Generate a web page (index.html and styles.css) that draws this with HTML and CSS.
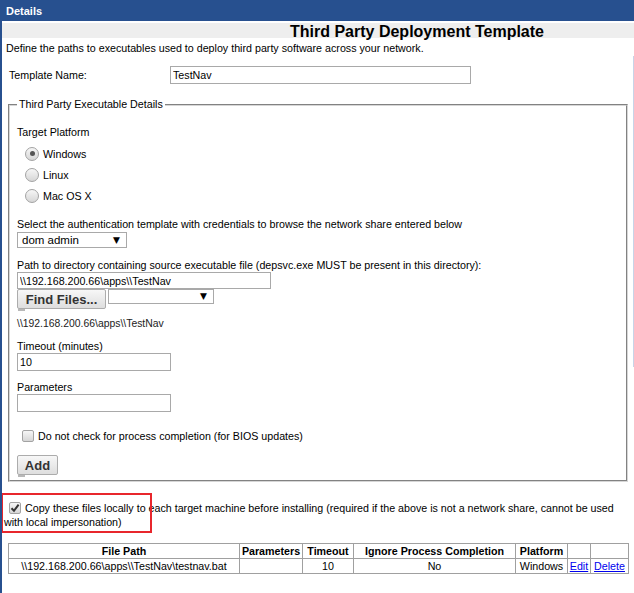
FILE: index.html
```html
<!DOCTYPE html>
<html lang="en">
<head>
    <meta charset="UTF-8">
    <title>Third Party Deployment Template</title>
    <link rel="stylesheet" href="styles.css">
</head>
<body>

<div class="panel">
    <div class="panel-header">Details</div>
    <div class="scroll-edge"></div>

    <h1 class="page-title">Third Party Deployment Template</h1>
    <div class="intro">Define the paths to executables used to deploy third party software across your network.</div>

    <div class="name-row">
        <span class="name-label">Template Name:</span>
        <input type="text" class="text-input name-input" value="TestNav">
    </div>

    <fieldset class="exec-details">
        <legend>Third Party Executable Details</legend>

        <div class="field-label platform-label">Target Platform</div>
        <label class="radio-row"><span class="radio checked"></span>Windows</label>
        <label class="radio-row"><span class="radio"></span>Linux</label>
        <label class="radio-row"><span class="radio"></span>Mac OS X</label>

        <div class="field-label auth-label">Select the authentication template with credentials to browse the network share entered below</div>
        <div class="select auth-select"><span>dom admin</span><span class="arrow">&#9660;</span></div>

        <div class="field-label path-label">Path to directory containing source executable file (depsvc.exe MUST be present in this directory):</div>
        <input type="text" class="text-input path-input" value="\\192.168.200.66\apps\\TestNav">
        <div class="find-row">
            <button class="button find-button">Find Files...</button>
            <div class="select file-select"><span></span><span class="arrow">&#9660;</span></div>
        </div>
        <div class="path-note">\\192.168.200.66\apps\\TestNav</div>

        <div class="field-label timeout-label">Timeout (minutes)</div>
        <input type="text" class="text-input short-input" value="10">

        <div class="field-label params-label">Parameters</div>
        <input type="text" class="text-input short-input" value="">

        <label class="check-row"><span class="checkbox"></span>Do not check for process completion (for BIOS updates)</label>

        <button class="button add-button">Add</button>
    </fieldset>

    <div class="copy-wrap">
        <p class="copy-text"><span class="checkbox checked"><svg width="10" height="10" viewBox="0 0 10 10"><path d="M1.5 5.2 L4 7.8 L8.6 1.6" fill="none" stroke="#333" stroke-width="2"/></svg></span>Copy these files locally to each target machine before installing (required if the above is not a network share, cannot be used with local impersonation)</p>
        <div class="highlight"></div>
    </div>

    <table class="file-table">
        <colgroup>
            <col class="col-path">
            <col class="col-params">
            <col class="col-timeout">
            <col class="col-ignore">
            <col class="col-platform">
            <col class="col-edit">
            <col class="col-delete">
        </colgroup>
        <tr>
            <th>File Path</th>
            <th>Parameters</th>
            <th>Timeout</th>
            <th>Ignore Process Completion</th>
            <th>Platform</th>
            <th></th>
            <th></th>
        </tr>
        <tr>
            <td>\\192.168.200.66\apps\\TestNav\testnav.bat</td>
            <td></td>
            <td>10</td>
            <td>No</td>
            <td>Windows</td>
            <td><a href="#">Edit</a></td>
            <td><a href="#">Delete</a></td>
        </tr>
    </table>
</div>

</body>
</html>
```

FILE: styles.css
```css
body {
    margin: 0;
    font-family: "Liberation Sans", Arial, sans-serif;
    font-size: 10.7px;
    color: #000;
    background-color: #fff;
}
.panel {
    position: relative;
    border-left: 2px solid #27508f;
    height: 593px;
    box-sizing: border-box;
    overflow: hidden;
}
.panel-header {
    background-color: #27508f;
    color: #fff;
    font-weight: bold;
    font-size: 11px;
    height: 21px;
    line-height: 22px;
    padding-left: 4px;
}
.scroll-edge {
    position: absolute;
    right: 0;
    top: 56px;
    width: 1px;
    height: 311px;
    background-color: #c8d4e8;
}
.page-title {
    margin: 2px 0 0;
    height: 15px;
    line-height: 17px;
    background-color: #eee;
    font-size: 16px;
    text-align: center;
    padding-left: 198px;
}
.intro {
    margin: 4px 0 0 4px;
    line-height: 13px;
}
.name-row {
    display: flex;
    align-items: center;
    margin-top: 11px;
    padding-left: 7px;
}
.name-label {
    width: 161px;
}
.text-input {
    display: block;
    box-sizing: border-box;
    height: 18px;
    margin: 0;
    padding: 0 2px;
    border: 1px solid #a9a9a9;
    font-family: inherit;
    font-size: 10.7px;
    color: #000;
}
.name-input {
    width: 301px;
}
.path-input {
    width: 254px;
    height: 17px;
}
.short-input {
    width: 154px;
}

/* fieldset */
.exec-details {
    margin: 14px 6px 0 6px;
    padding: 0 7px 5px;
    border: 2px groove #d6d6d6;
    min-width: 0;
}
.exec-details legend {
    padding: 0 2px;
    line-height: 13px;
}
.field-label {
    line-height: 13px;
}
.platform-label {
    margin-top: 15px;
}
.auth-label {
    margin-top: 16px;
}
.path-label {
    margin-top: 11px;
}
.timeout-label {
    margin-top: 10px;
}
.params-label {
    margin-top: 10px;
}
.radio-row {
    display: flex;
    align-items: center;
    gap: 4px;
    height: 13px;
    margin-top: 8px;
    padding-left: 8px;
}
.radio {
    width: 12px;
    height: 12px;
    border: 1px solid #a3a3a3;
    border-radius: 50%;
    background: linear-gradient(#f6f6f6, #d6d6d6);
    position: relative;
}
.radio.checked::after {
    content: "";
    position: absolute;
    left: 3.5px;
    top: 3.5px;
    width: 5px;
    height: 5px;
    border-radius: 50%;
    background-color: #555;
}
.check-row {
    display: flex;
    align-items: center;
    gap: 4px;
    height: 13px;
    margin-top: 17px;
    padding-left: 5px;
}
.checkbox {
    display: inline-block;
    box-sizing: border-box;
    width: 12px;
    height: 12px;
    border: 1px solid #a3a3a3;
    border-radius: 2px;
    background: linear-gradient(#f6f6f6, #d6d6d6);
    vertical-align: -2px;
}
.checkbox svg {
    display: block;
}

/* selects and buttons */
.select {
    display: flex;
    justify-content: space-between;
    align-items: center;
    box-sizing: border-box;
    border: 1px solid #a9a9a9;
    background-color: #fff;
    line-height: 13px;
}
.select .arrow {
    font-family: "DejaVu Sans", sans-serif;
    font-size: 9px;
}
.auth-select {
    width: 110px;
    height: 16px;
    margin-top: 1px;
    padding: 0 6px 0 4px;
    font-size: 11.5px;
}
.file-select {
    width: 106px;
    height: 15px;
    padding: 0 6px 0 4px;
}
.find-row {
    display: flex;
    align-items: flex-start;
    gap: 2px;
}
.button {
    position: relative;
    box-sizing: border-box;
    border: 1px solid #acacac;
    border-radius: 2px;
    background: linear-gradient(#f7f7f7, #dedede);
    font-family: inherit;
    font-size: 13px;
    font-weight: bold;
    color: #333;
    padding: 0;
    margin: 0;
}
.button::after {
    content: "";
    position: absolute;
    left: 0;
    bottom: -3px;
    width: 7px;
    height: 2px;
    background-color: #b8b8b8;
}
.find-button {
    width: 89px;
    height: 20px;
}
.path-note {
    margin-top: 8px;
    line-height: 13px;
    font-size: 10.4px;
    color: #222;
}
.add-button {
    display: block;
    width: 41px;
    height: 20px;
    margin-top: 13px;
}

/* copy option */
.copy-wrap {
    position: relative;
    margin-top: 19px;
}
.copy-text {
    margin: 0;
    padding: 0 8px 0 2px;
    line-height: 14px;
}
.copy-text .checkbox {
    margin: 0 4px 0 5px;
}
.highlight {
    position: absolute;
    left: -1px;
    top: -8px;
    width: 147px;
    height: 36px;
    border: 2px solid #e8262c;
}

/* file table */
.file-table {
    margin: 14px 0 0 6px;
    width: 620px;
    border-collapse: collapse;
    table-layout: fixed;
}
.file-table th,
.file-table td {
    border: 1px solid #a0a0a0;
    padding: 0;
    height: 14px;
    line-height: 13px;
    text-align: center;
    white-space: nowrap;
}
.file-table a {
    color: #0000ee;
}
.col-path { width: 231px; }
.col-params { width: 63px; }
.col-timeout { width: 51px; }
.col-ignore { width: 162px; }
.col-platform { width: 52px; }
.col-edit { width: 23px; }
.col-delete { width: 38px; }
```
